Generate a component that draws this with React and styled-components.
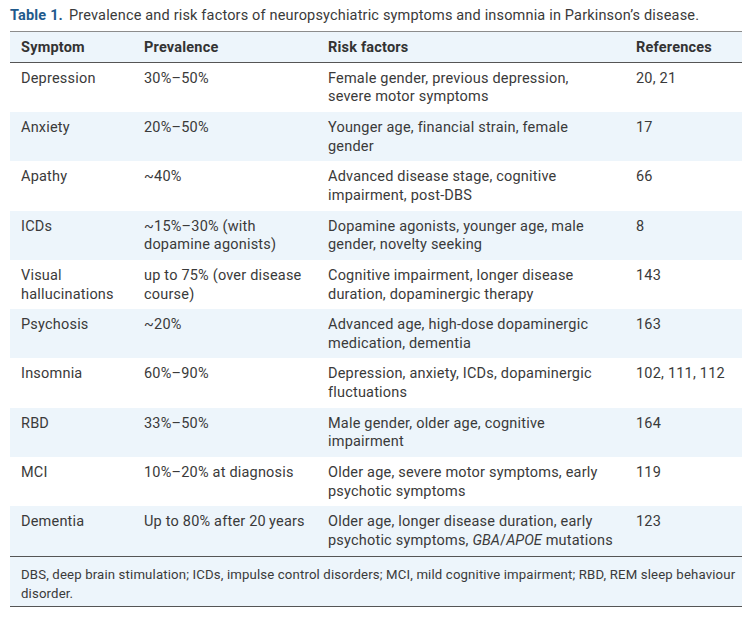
import React from "react";
import styled, { createGlobalStyle } from "styled-components";

const Global = createGlobalStyle`
  html, body { margin: 0; padding: 0; background: #fff; }
  body { font-family: Roboto, "Liberation Sans", sans-serif; color: #333; }
`;

const Page = styled.div`
  padding: 6px 10px 0 10px;
`;

const Caption = styled.div`
  font-size: 14.5px;
  letter-spacing: 0.17px;
  line-height: 20px;
  color: #3a3a3a;
  margin-bottom: 5px;
  white-space: nowrap;
`;

const Label = styled.span`
  color: #1f5a8c;
  font-weight: 700;
  margin-right: 6px;
`;

const Table = styled.table`
  width: 732px;
  border-collapse: collapse;
  table-layout: fixed;
  font-size: 14.5px;
  letter-spacing: 0.2px;
  line-height: 18.7px;
  border-top: 1px solid #8c8c8c;
`;

const HeadRow = styled.tr`
  background: #edf5fb;
  border-bottom: 1px solid #555;
`;

const Th = styled.th`
  text-align: left;
  font-weight: 700;
  padding: 7px 11px 4px;
  color: #333;
`;

const Row = styled.tr`
  background: ${(p) => (p.$shade ? "#edf5fb" : "#fff")};
`;

const Td = styled.td`
  vertical-align: top;
  padding: 7px 11px 4.9px 11px;
  color: #3a3a3a;
`;

const Gene = styled.i`
  letter-spacing: 0;
`;

const Foot = styled.td`
  background: #edf5fb;
  border-top: 1px solid #555;
  border-bottom: 1px solid #555;
  padding: 8px 4px 3px 11px;
  font-size: 13.2px;
  letter-spacing: 0.15px;
  line-height: 19px;
  color: #3a3a3a;
`;

const cols = [123, 184, 308, 117];

const rows = [
  ["Depression", "30%–50%", "Female gender, previous depression, severe motor symptoms", "20, 21"],
  ["Anxiety", "20%–50%", "Younger age, financial strain, female gender", "17"],
  ["Apathy", "~40%", "Advanced disease stage, cognitive impairment, post-DBS", "66"],
  ["ICDs", "~15%–30% (with dopamine agonists)", "Dopamine agonists, younger age, male gender, novelty seeking", "8"],
  ["Visual hallucinations", "up to 75% (over disease course)", "Cognitive impairment, longer disease duration, dopaminergic therapy", "143"],
  ["Psychosis", "~20%", "Advanced age, high-dose dopaminergic medication, dementia", "163"],
  ["Insomnia", "60%–90%", "Depression, anxiety, ICDs, dopaminergic fluctuations", "102, 111, 112"],
  ["RBD", "33%–50%", "Male gender, older age, cognitive impairment", "164"],
  ["MCI", "10%–20% at diagnosis", "Older age, severe motor symptoms, early psychotic symptoms", "119"],
  [
    "Dementia",
    "Up to 80% after 20\u2009years",
    <>Older age, longer disease duration, early psychotic symptoms, <Gene>GBA</Gene>/<Gene>APOE</Gene> mutations</>,
    "123",
  ],
];

export default function App() {
  return (
    <Page>
      <Global />
      <Caption>
        <Label>Table 1.</Label>
        Prevalence and risk factors of neuropsychiatric symptoms and insomnia in Parkinson’s disease.
      </Caption>
      <Table>
        <colgroup>
          {cols.map((w, i) => (
            <col key={i} style={{ width: w }} />
          ))}
        </colgroup>
        <thead>
          <HeadRow>
            <Th>Symptom</Th>
            <Th>Prevalence</Th>
            <Th>Risk factors</Th>
            <Th>References</Th>
          </HeadRow>
        </thead>
        <tbody>
          {rows.map((r, i) => (
            <Row key={i} $shade={i % 2 === 1}>
              {r.map((c, j) => (
                <Td key={j}>{c}</Td>
              ))}
            </Row>
          ))}
        </tbody>
        <tfoot>
          <tr>
            <Foot colSpan={4}>
              DBS, deep brain stimulation; ICDs, impulse control disorders; MCI, mild cognitive impairment; RBD, REM sleep behaviour disorder.
            </Foot>
          </tr>
        </tfoot>
      </Table>
    </Page>
  );
}
